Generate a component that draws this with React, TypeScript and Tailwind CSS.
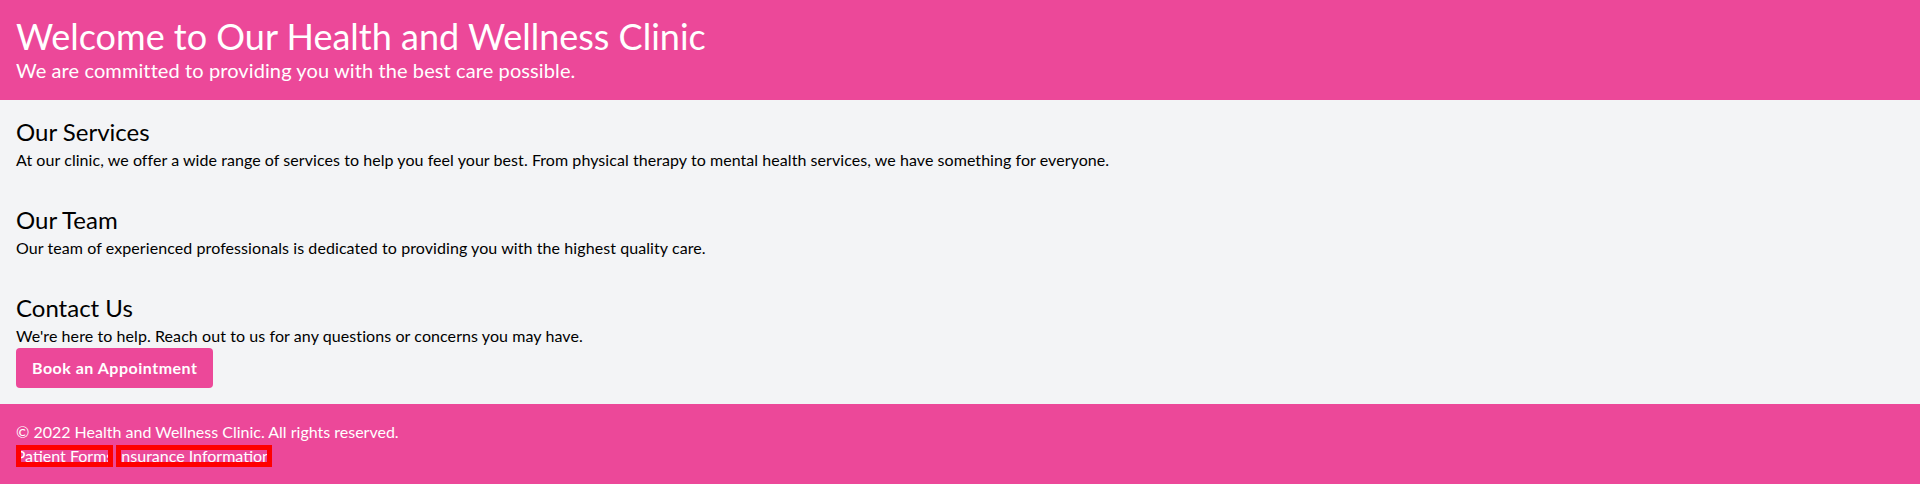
import React from "react";

export default function App() {
  const font = { fontFamily: "Lato, 'Open Sans', sans-serif" };
  return (
    <div className="min-h-[484px] bg-[#f3f4f6] text-black" style={font}>
      <header className="bg-[#ec4899] p-4 text-white">
        <h1 className="text-4xl leading-10">Welcome to Our Health and Wellness Clinic</h1>
        <p className="text-xl leading-7 tracking-[0.1px]">We are committed to providing you with the best care possible.</p>
      </header>
      <main className="p-4">
        <section className="mb-8">
          <h2 className="text-2xl leading-8">Our Services</h2>
          <p className="text-base leading-6 tracking-[0.06px]">
            At our clinic, we offer a wide range of services to help you feel your best. From physical therapy to mental health services, we have something for everyone.
          </p>
        </section>
        <section className="mb-8">
          <h2 className="text-2xl leading-8">Our Team</h2>
          <p className="text-base leading-6 tracking-[0.08px]">
            Our team of experienced professionals is dedicated to providing you with the highest quality care.
          </p>
        </section>
        <section>
          <h2 className="text-2xl leading-8">Contact Us</h2>
          <p className="text-base leading-6 tracking-[0.08px]">
            We're here to help. Reach out to us for any questions or concerns you may have.
          </p>
          <button className="rounded bg-[#ec4899] px-4 py-2 text-base font-bold leading-6 tracking-[0.5px] text-white">
            Book an Appointment
          </button>
        </section>
      </main>
      <footer className="bg-[#ec4899] p-4 text-white">
        <p className="text-base leading-6">© 2022 Health and Wellness Clinic. All rights reserved.</p>
        <div className="flex h-6 items-center gap-[3px]">
          <a className="flex h-[22px] w-[97px] items-center justify-center overflow-hidden whitespace-nowrap border-[5px] border-[#ff0000] text-base leading-6">
            Patient Forms
          </a>
          <a className="flex h-[22px] w-[156px] items-center justify-center overflow-hidden whitespace-nowrap border-[5px] border-[#ff0000] text-base leading-6">
            Insurance Information
          </a>
        </div>
      </footer>
    </div>
  );
}
